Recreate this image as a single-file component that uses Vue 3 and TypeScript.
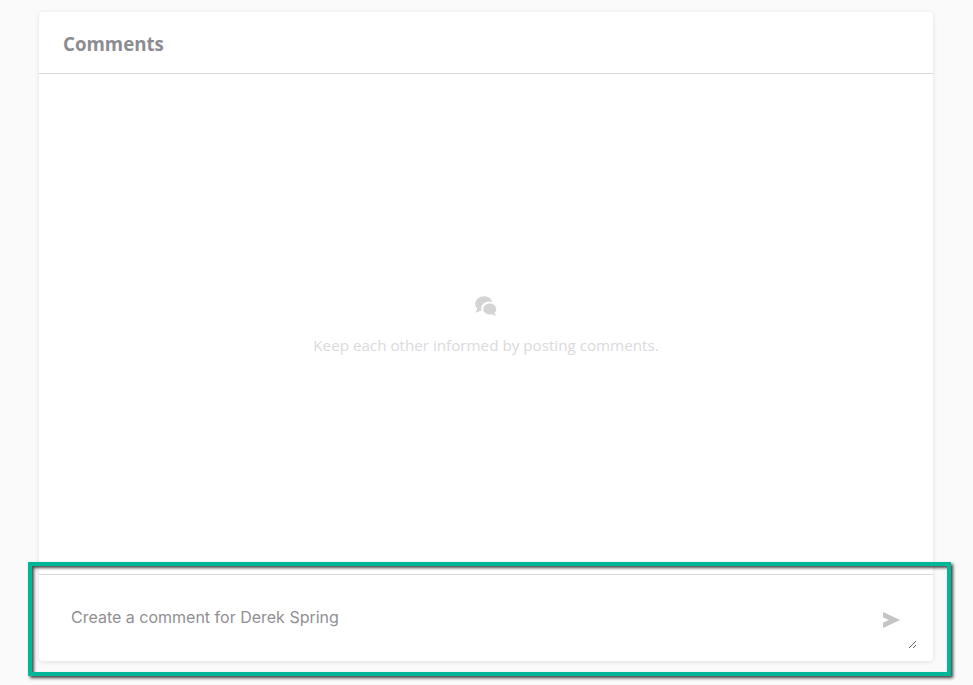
<script setup lang="ts">
import { ref } from 'vue'

const recipient = 'Derek Spring'
const comment = ref('')
</script>

<template>
  <div class="page">
    <section class="card">
      <header class="card-header">
        <h2 class="title">Comments</h2>
      </header>

      <div class="card-body">
        <svg class="empty-icon" viewBox="0 0 24 24" width="26" height="26" aria-hidden="true">
          <path d="M10.5 2C5.8 2 2 5.2 2 9.1c0 1.7.7 3.2 1.9 4.400-.3 1.300-1 2.500-1.900 3.500 1.600-.1 3.200-.7 4.500-1.600.5.2 1 .3 1.500.4-.3-.7-.4-1.400-.4-2.200 0-3.700 3.300-6.600 7.400-6.600 1 0 1.900.2 2.800.5C17 4.100 14 2 10.500 2z" />
          <path d="M15.500 8.800c-3.300 0-6 2.300-6 5.100s2.700 5.100 6 5.100c.7 0 1.400-.1 2-.3 1 .8 2.300 1.300 3.800 1.400-.7-.8-1.200-1.700-1.400-2.700 1-.9 1.600-2.100 1.600-3.500 0-2.800-2.700-5.100-6-5.100z" />
        </svg>
        <p class="empty-text">Keep each other informed by posting comments.</p>
      </div>

      <footer class="card-footer">
        <textarea
          v-model="comment"
          class="comment-input"
          :placeholder="`Create a comment for ${recipient}`"
        ></textarea>
        <button class="send" type="button" aria-label="Send">
          <svg viewBox="0 0 24 24" width="20" height="20" aria-hidden="true">
            <path d="M2.500 2.500 23 12 2.500 21.500v-6.500l7-3-7-3z" />
          </svg>
        </button>
      </footer>
    </section>

    <div class="highlight"></div>
  </div>
</template>

<style scoped>
.page {
  position: relative;
  box-sizing: border-box;
  height: 685px;
  padding: 12px 40px 24px 39px;
  background: #fafafa;
  overflow: hidden;
}

.card {
  display: flex;
  flex-direction: column;
  height: 100%;
  background: #fff;
  border-radius: 4px;
  box-shadow: 0 1px 5px rgba(0, 0, 0, 0.1);
}

.card-header {
  box-sizing: border-box;
  height: 62px;
  padding: 2px 24px 0;
  display: flex;
  align-items: center;
  border-bottom: 1px solid #d9d9d9;
}

.title {
  margin: 0;
  font-family: "Open Sans", sans-serif;
  font-size: 18.7px;
  font-weight: 700;
  color: #8c8c91;
}

.card-body {
  flex: 1;
  display: flex;
  flex-direction: column;
  align-items: center;
  justify-content: center;
  padding-top: 2px;
}

.empty-icon {
  fill: #d4d4d4;
  margin-bottom: 14px;
}

.empty-text {
  margin: 0;
  font-family: "Open Sans", sans-serif;
  font-size: 15.2px;
  line-height: 22px;
  color: #dadadc;
}

.card-footer {
  position: relative;
  box-sizing: border-box;
  height: 87px;
  padding: 15px 16px 12px;
  border-top: 1px solid #d9d9d9;
}

.comment-input {
  display: block;
  box-sizing: border-box;
  width: 100%;
  height: 59px;
  padding: 16px 56px 16px 16px;
  border: none;
  outline: none;
  resize: vertical;
  background: transparent;
  font-family: Inter, sans-serif;
  font-size: 16px;
  line-height: 22px;
  color: #555;
}

.comment-input::placeholder {
  color: #8f8f93;
  opacity: 1;
}

.send {
  position: absolute;
  top: 35px;
  right: 32px;
  display: flex;
  padding: 0;
  border: none;
  background: none;
  cursor: pointer;
}

.send svg {
  fill: #c4c4c4;
}

.highlight {
  position: absolute;
  left: 28px;
  top: 562px;
  box-sizing: border-box;
  width: 923px;
  height: 114px;
  border: 4px solid #00b797;
  box-shadow: 2px 2px 3px rgba(0, 0, 0, 0.75), inset 2px 2px 3px rgba(0, 0, 0, 0.7);
  pointer-events: none;
}
</style>
